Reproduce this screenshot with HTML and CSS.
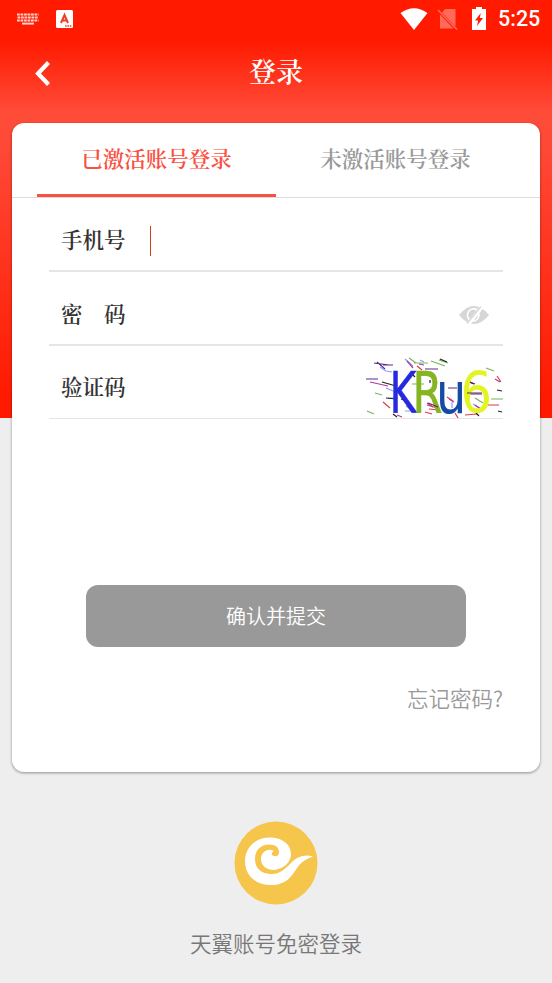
FILE: index.html
```html
<!DOCTYPE html>
<html lang="zh-CN">
<head>
<meta charset="utf-8">
<title>登录</title>
<link rel="stylesheet" href="styles.css">
</head>
<body>
<div class="screen">
  <div class="status">
    <svg class="kbd" width="22" height="12" viewBox="0 0 22 12"><path d="M0 1.500H21.500M.5 4.500H21M0 7.500H21.500" stroke="#ffd3cb" stroke-width="2.200" stroke-dasharray="2.800 .7"/><path d="M5 10.600H17" stroke="#ffd3cb" stroke-width="2"/></svg>
    <svg class="ime" width="17" height="18" viewBox="0 0 17 18"><rect width="17" height="18" rx="1.500" fill="#fff"/><path d="M5 13L8.500 5L12 13M6.200 10.500H10.800" fill="none" stroke="#f23a25" stroke-width="2"/><path d="M9 16H15.500" stroke="#f23a25" stroke-width="1.300" stroke-dasharray="1.600 .8"/></svg>
    <span class="grow"></span>
    <svg class="wifi" width="28" height="22" viewBox="0 0 28 22"><path d="M.5 5Q14-4.500 27.500 5L14 22Z" fill="#fff"/></svg>
    <svg class="sim" width="21" height="22" viewBox="0 0 21 22"><path d="M8 1H18.500V18.500L5 4.500ZM3 6.500L16.500 20.500H3Z" fill="#ff6a5a"/><path d="M1 2L20 21.500" stroke="#ff6a5a" stroke-width="1.600"/></svg>
    <svg class="battery" width="14" height="23" viewBox="0 0 14 23"><path d="M4 0H10V2H14V23H0V2H4Z" fill="#fff"/><path d="M8.800 6L3 13.500H6.200L5 19L11 11H7.800Z" fill="#ff1a00"/></svg>
    <span class="time">5:25</span>
  </div>
  <header class="header">
    <svg class="back" width="16" height="25" viewBox="0 0 16 25"><path d="M13.500 1.500L3 12.500L13.500 23.500" fill="none" stroke="#fff" stroke-width="4.200"/></svg>
    <h1 class="title">登录</h1>
  </header>
  <main class="card">
    <nav class="tabs">
      <a class="tab active">已激活账号登录</a>
      <a class="tab">未激活账号登录</a>
    </nav>
    <div class="form">
      <div class="row"><label>手机号</label><span class="caret"></span></div>
      <div class="row"><label>密　码</label>
        <svg class="eye" width="32" height="20" viewBox="0 0 32 20"><path d="M1 10Q16-8 31 10Q16 28 1 10Z" fill="#d6d6d6"/><path d="M12 15A6 6 0 0 1 19 5" fill="none" stroke="#fff" stroke-width="1.600"/><path d="M20 7A6 6 0 0 1 14 16" fill="none" stroke="#fff" stroke-width="1.600"/><path d="M9.500 20L24.500 1" stroke="#fff" stroke-width="4"/><path d="M9 18.500L23 1.500" stroke="#d6d6d6" stroke-width="1.300"/></svg>
      </div>
      <div class="row last"><label>验证码</label>
        <svg class="captcha" width="138" height="62" viewBox="365 356 138 62">
          <g fill="none" stroke-width="1.200">
            <path stroke="#5a2a8a" d="M374 363L389 365M377 362L385 369M383 365H393M425 369H438M366 379L378 379M448 388H457M467 394H482"/>
            <path stroke="#8a9aff" d="M380 367L386 371L392 372M405 359L413 366M420 360L424 362M386 388L393 391M388 398H398M405 411H413M452 402V408M473 404L481 409"/>
            <path stroke="#79b55c" d="M409 358L416 363M414 363H428M431 361L445 366M439 360L448 363M486 368L494 371M491 399H503M375 393L382 395M367 411L374 414M406 406L412 410M412 384H424M475 398L483 403"/>
            <path stroke="#e03b45" d="M383 402L390 408M417 366L422 370M420 374H432M488 405H499M427 405L437 408M429 409L440 410M447 397L453 401M455 413L458 418M465 415L477 414M497 376L501 382M425 412L432 414"/>
            <path stroke="#222" d="M440 359L447 362M382 382L396 386M386 398L396 399M393 414L397 417M469 382L474 384M476 413L479 416M430 380V383M401 399L407 401M411 373L415 377M497 390L502 391M498 411L502 412"/>
            <path stroke="#b43aa0" d="M407 361L413 368M419 364L424 365M427 403L433 407M449 399L454 402M370 382L388 386M475 405L482 410M397 415L402 417M495 379L500 382"/>
          </g>
          <g font-family="DejaVu Sans, sans-serif" font-size="57">
            <text transform="translate(389.500 412.500) scale(.72 1)" fill="#2629dd" stroke="#2629dd" stroke-width=".5">K</text>
            <text transform="translate(412.500 412.500) scale(.76 1)" fill="#86b422" stroke="#86b422" stroke-width=".5">R</text>
            <text transform="translate(436 412.500) scale(.84 1)" fill="#164aa5">u</text>
            <text transform="translate(460.500 412.500) scale(.87 1)" fill="#e4f422">6</text>
          </g>
          <path d="M467 393H482M470 382L475 384M428 403L438 407" stroke="#682060" stroke-width="1.200"/>
        </svg>
      </div>
    </div>
    <button class="submit">确认并提交</button>
    <a class="forgot">忘记密码?</a>
  </main>
  <footer class="footer">
    <svg class="logo" width="84" height="84" viewBox="0 0 84 84"><circle cx="42" cy="42" r="41.500" fill="#f5c64b"/><path d="M57 33C57 22 46 16.500 36 16.500C20 16.500 11 28 11 40C11 55 22 64 37 64C52 64 57 56 63 47C67 41 72 38 79 35.500C70 33 63 36 57 42C51 48 46 53 38 53C27 53 21 47 21 38C21 28 28 23.500 35 23.500C42 23.500 45 27 45 31C45 35 42 36 38.500 34.500C37 33 38 31 40 30C34 26.500 27 31 27 38C27 45 33 49 40 49C50 48 57 41 57 33Z" fill="#fff"/></svg>
    <span>天翼账号免密登录</span>
  </footer>
</div>
</body>
</html>
```
FILE: styles.css
```css
* { box-sizing: border-box; }
body { margin: 0; font-family: "Noto Sans CJK SC", sans-serif; }
.screen {
  width: 552px; height: 983px; display: flex; flex-direction: column; overflow: hidden;
  background: linear-gradient(#ff1a00 0, #ff1a00 40px, #ff4d3a 114px, #ff4937 145px, #ff1a00 400px, #ff1a00 418px, #eee 418px);
}
.status { height: 37px; padding: 0 12px 0 17px; display: flex; align-items: center; }
.ime { margin-left: 17px; }
.grow { flex: 1; }
.sim { margin-left: 9px; }
.battery { margin-left: 14px; }
.time { width: 42px; margin-left: 12px; color: #fff; font: 500 21.5px/39px Roboto, sans-serif; white-space: nowrap; }
.header { height: 86px; display: grid; grid-template-columns: 60px 1fr 60px; align-items: start; }
.back { margin: 24px 0 0 35px; }
.title { margin: 14px 0 0; color: #fff; font: 600 27px/40px "Noto Serif CJK SC", "Noto Sans CJK SC", serif; text-align: center; }
.card { width: 528px; height: 649px; margin: 0 auto; background: #fff; border-radius: 12px; box-shadow: 0 1px 3px #0006; display: flex; flex-direction: column; }
.tabs { height: 75px; padding: 0 25px; display: flex; border-bottom: 1px solid #ddd; }
.tab { flex: 1; height: 74px; color: #999; font: 600 21.5px/70px "Noto Serif CJK SC", "Noto Sans CJK SC", serif; text-align: center; }
.tab.active { color: #fa503f; border-bottom: 3px solid #fa503f; }
.form { margin: 0 37px; }
.row { height: 74px; padding-left: 12px; display: flex; align-items: center; border-bottom: 2px solid #e5e5e5; }
.row.last { height: 73px; border-bottom-width: 1px; }
.row label { padding-top: 10px; color: #333; font: 600 21.5px/30px "Noto Serif CJK SC", "Noto Sans CJK SC", serif; }
.row.last label { padding-top: 8px; }
.row .caret { width: 1px; height: 30px; margin: 13px 0 0 24px; background: #d04020; }
.eye { margin: 14px 13px 0 auto; }
.captcha { margin-left: auto; align-self: flex-end; }
.submit { width: 380px; height: 62px; margin: 166px auto 0; padding: 0; border: 0; border-radius: 12px; background: #999; color: #fff; font: 350 20px/62px "Noto Sans CJK SC", sans-serif; }
.forgot { margin: 35px 37px 0 0; align-self: flex-end; color: #999; font-size: 21.5px; font-weight: 350; line-height: 32px; }
.footer { padding-top: 49px; display: flex; flex-direction: column; align-items: center; color: #777; font-size: 21.5px; font-weight: 350; line-height: 32px; }
.footer span { margin-top: 22px; }
```
